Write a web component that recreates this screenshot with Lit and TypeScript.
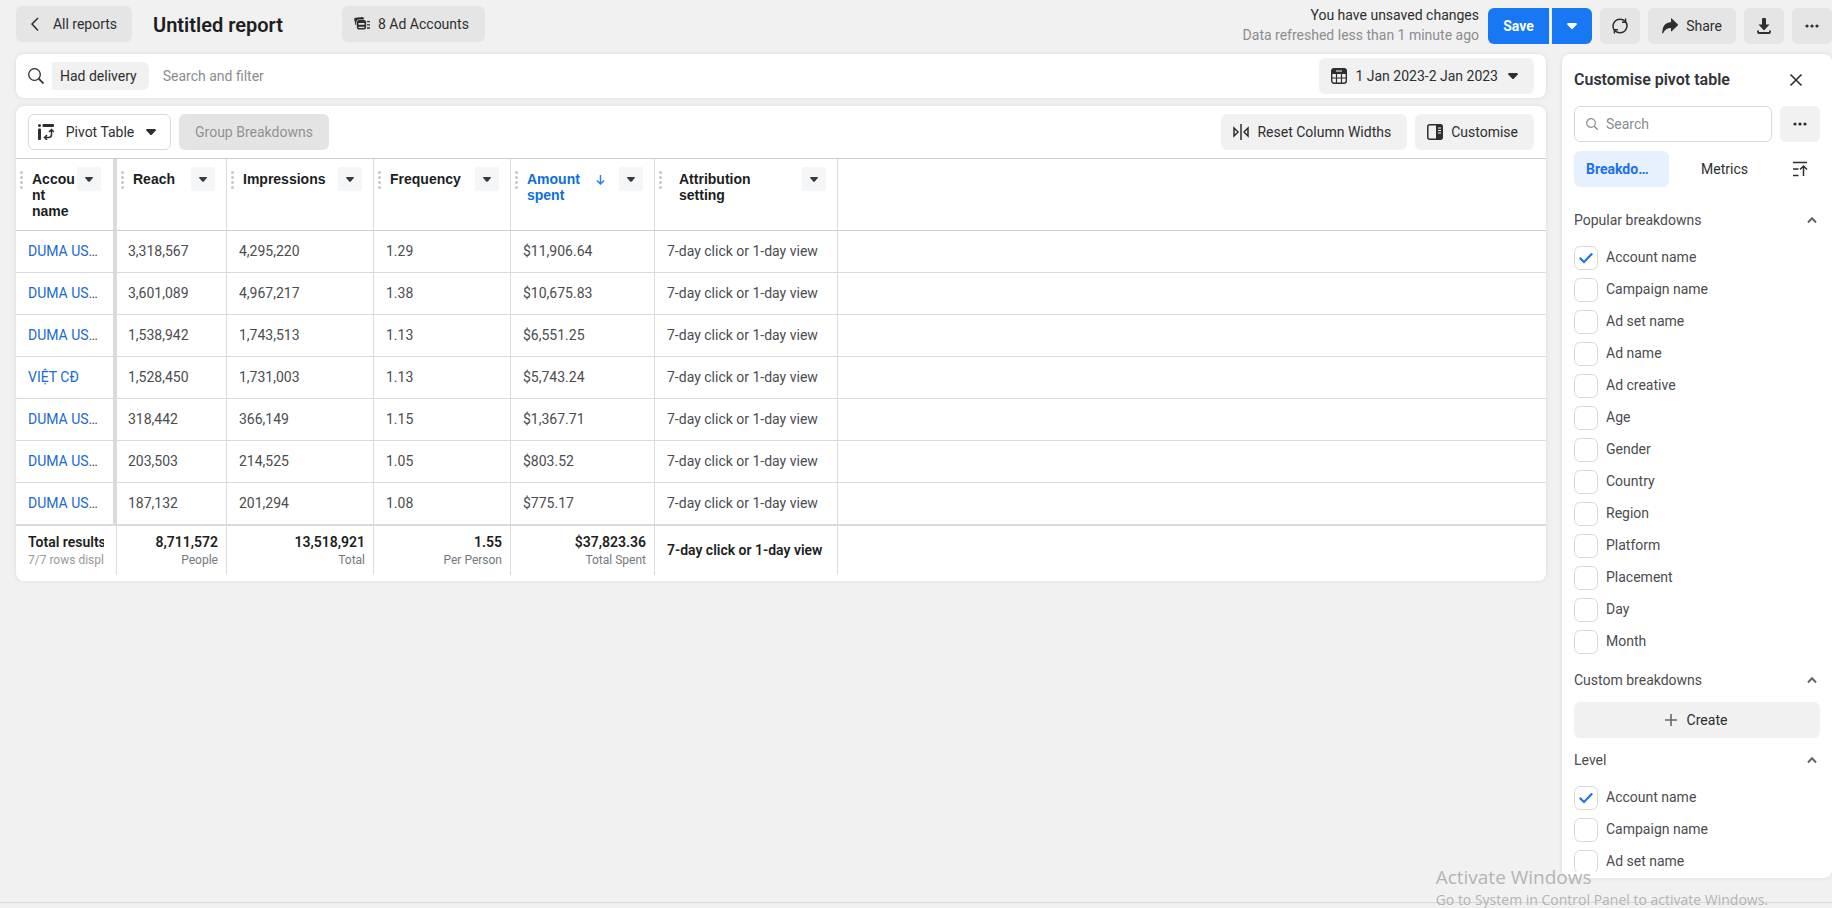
import { LitElement, html, css, svg } from "lit";
import { customElement, property } from "lit/decorators.js";

const icon = (body: unknown, w = 16, h = 16) => html`<svg width=${w} height=${h} viewBox="0 0 ${w} ${h}" fill="none" stroke="currentColor" aria-hidden="true">${body}</svg>`;

const caret = icon(svg`<path d="M0 1.2Q0 0 1.2 0H8.8Q10 0 9.8 1.4L6 5.4Q5 6.4 4 5.4L.3 1.6Z" fill="currentColor" stroke="none"/>`, 10, 6);
const caretSmall = icon(svg`<path d="M0 .8Q0 0 .8 0H7.2Q8 0 8 .8L4.8 4.4Q4 5.2 3.2 4.4Z" fill="currentColor" stroke="none"/>`, 8, 5);
const back = icon(svg`<path d="M11 2L5 8l6 6.500" stroke-width="1.500"/>`);
const accounts = icon(svg`<path d="M.2 3.200Q0 1.900 1.300 1.700L8.500 1Q9.600 1 9.800 2V3.500H4.500Q2.300 3.500 2.300 6V9.500L1.500 9Z" fill="currentColor" stroke="none"/><rect x="3.700" y="4.700" width="7.600" height="8.100" rx="1.200" stroke-width="1.600"/><path d="M4 6h7M4 9.700h7" stroke-width="2"/><path d="M13 5.700H16M13 8.800H16M13 12H16" stroke-width="1.300"/>`);
const magnifier = icon(svg`<circle cx="6.500" cy="6.500" r="5.800" stroke-width="1.300"/><path d="M10.700 10.700 15.500 15.500" stroke-width="1.700"/>`);
const magnifierSmall = icon(svg`<circle cx="5" cy="5" r="4.300" stroke-width="1.200"/><path d="M8.200 8.200 12 12" stroke-width="1.300"/>`, 12, 12);
const pivot = icon(svg`<g fill="currentColor" stroke="none"><circle cx="1.500" cy="1.500" r="1.500"/><rect x="4.500" width="11.500" height="3" rx="1"/><rect y="4.500" width="3" height="11.500" rx="1"/></g><path d="M13.500 6v4.500q0 3-3 3H6.500M11 8l2.500-2.500L16 8M9 11l-2.500 2.500L9 16" stroke-width="1.500"/>`);
const calendar = icon(svg`<rect x=".7" y=".7" width="14.600" height="14.600" rx="2.500" stroke-width="1.400"/><path d="M1 1.800Q1 1 2 1H14q1 0 1 1V5.500H1Z" fill="currentColor"/><path d="M5.500 5v10M10.500 5v10M1 10h14" stroke-width="1.200"/><path d="M5 3h6" stroke="#fff" stroke-width="1"/>`);
const reset = icon(svg`<path d="M8 0v16" stroke-width="1.500"/><path d="M1 4v8l4-4Z M15 4v8l-4-4Z" stroke-width="1.500"/>`);
const sidebar = icon(svg`<rect x=".8" y=".8" width="14.400" height="14.400" rx="2" stroke-width="1.500"/><path d="M9.500 1H14q1 0 1 1v12q0 1-1 1H9.500Z" fill="currentColor"/><path d="M11 4h3M11 6.500h3M11 9h3" stroke="#fff"/>`);
const refresh = icon(svg`<path d="M2.200 12A7 7 0 0 1 8 1.200Q11 1.200 13.200 3.400M13.800 4A7 7 0 0 1 8 14.800Q5 14.800 2.800 12.600" stroke-width="1.500"/><path d="M10 4.200H13.600V.5M6 11.800H2.400V15.500" stroke-width="1.400"/>`);
const share = icon(svg`<path d="M9 .8Q9 0 9.700.5L15.700 6.300Q16.200 7 15.700 7.600L9.700 13.300Q9 13.800 9 13V10Q3.500 10 1 15.300.2 16 .1 15 .3 4.500 9 4Z" fill="currentColor" stroke="none"/>`);
const download = icon(svg`<path d="M6 1q0-1 1-1H9q1 0 1 1V6.500h3.500L8 12.500 2.500 6.500H6Z" fill="currentColor" stroke="none"/><path d="M2 12.500v1.500q0 1 1 1H13q1 0 1-1V12.500" stroke-width="1.800"/>`);
const dots = icon(svg`<g fill="currentColor" stroke="none"><circle cx="3" cy="8" r="1.600"/><circle cx="8" cy="8" r="1.600"/><circle cx="13" cy="8" r="1.600"/></g>`);
const close = icon(svg`<path d="M2.500 2.500l11 11M13.500 2.500l-11 11" stroke-width="1.600"/>`);
const sortIcon = icon(svg`<path d="M1 1.500h14M1 8h5.500M1 14.500h5.500M11.500 15V5M8 8.500 11.500 5 15 8.500" stroke-width="1.500"/>`);
const chevron = icon(svg`<path d="M1 6.500 5 2.200 9 6.500" stroke-width="2" stroke="#606770"/>`, 10, 8);
const plus = icon(svg`<path d="M6 0v12M0 6h12" stroke-width="1.600" stroke="#606770"/>`, 12, 12);
const grip = icon(svg`<g fill="#c4c6ca" stroke="none"><circle cx="1.500" cy="1.500" r="1.500"/><circle cx="1.500" cy="6.500" r="1.500"/><circle cx="1.500" cy="11.500" r="1.500"/><circle cx="1.500" cy="16.500" r="1.500"/></g>`, 3, 18);
const arrowDown = icon(svg`<path d="M4.500 0v9M1 5.500 4.500 9 8 5.500" stroke-width="1.500"/>`, 9, 10);

const base = css`
  * { box-sizing: border-box; }
  svg { display: block; flex: none; }
  button, input { font: inherit; color: inherit; margin: 0; }
  button { display: flex; align-items: center; justify-content: center; gap: 8px; height: 36px; padding: 0 12px; border: 0; border-radius: 6px; background: #f1f1f1; white-space: nowrap; cursor: pointer; }
`;

@customElement("report-header")
class ReportHeader extends LitElement {
  static styles = [base, css`
    :host { display: flex; align-items: flex-start; height: 54px; padding: 6px 0 0 16px; overflow: hidden; }
    button { background: #e5e5e5; }
    .back { width: 116px; gap: 10px; padding: 0 16px 0 12px; }
    h1 { margin: 0 0 0 21px; width: 189px; font-size: 20px; line-height: 38px; font-weight: 600; color: #1c1e21; }
    .accounts { padding: 0 16px 0 12px; }
    .spacer { flex: 1; }
    .status { text-align: right; line-height: 20px; margin: -1px 9px 0 0; white-space: nowrap; }
    .status p { margin: 0; }
    .muted { color: #8a8d91; }
    .actions { display: flex; gap: 8px; padding-top: 2px; }
    .save { display: flex; gap: 3px; }
    .save button { background: #1877f2; color: #fff; font-weight: 700; }
    .main { border-radius: 6px 0 0 6px; width: 61px; }
    .more { border-radius: 0 6px 6px 0; width: 40px; }
    .square { width: 40px; padding: 0; }
    .share { width: 88px; }
  `];
  render() {
    return html`
      <button class="back">${back}All reports</button>
      <h1>Untitled report</h1>
      <button class="accounts">${accounts}8 Ad Accounts</button>
      <div class="spacer"></div>
      <div class="status"><p>You have unsaved changes</p><p class="muted">Data refreshed less than 1 minute ago</p></div>
      <div class="actions">
        <div class="save"><button class="main">Save</button><button class="more" aria-label="Save options">${caret}</button></div>
        <button class="square" aria-label="Refresh">${refresh}</button>
        <button class="share">${share}Share</button>
        <button class="square" aria-label="Download">${download}</button>
        <button class="square" aria-label="More">${dots}</button>
      </div>`;
  }
}

@customElement("filter-bar")
class FilterBar extends LitElement {
  static styles = [base, css`
    :host { display: flex; align-items: center; height: 44px; padding: 0 12px; background: #fff; border-radius: 8px; box-shadow: 0 0 4px rgba(0, 0, 0, 0.1); }
    .chip { height: 28px; margin-left: 8px; padding: 0 12px 1px 8px; border-radius: 0 6px 6px 0; }
    input { flex: 1; min-width: 0; height: 36px; padding: 0 14px 1px; border: 0; outline: 0; background: none; }
    input::placeholder { color: #8a8d91; opacity: 1; }
    .date { padding: 0 16px 0 12px; }
    .date svg:last-child { margin-left: 2px; }
  `];
  render() {
    return html`${magnifier}<button class="chip">Had delivery</button>
      <input type="text" aria-label="Search and filter" placeholder="Search and filter" />
      <button class="date">${calendar}1 Jan 2023-2 Jan 2023${caret}</button>`;
  }
}

const columns = [
  { key: "account", label: "Account name" },
  { key: "reach", label: "Reach" },
  { key: "impressions", label: "Impressions" },
  { key: "frequency", label: "Frequency" },
  { key: "spent", label: "Amount spent", sorted: true },
  { key: "attribution", label: "Attribution setting" },
];

const windowText = "7-day click or 1-day view";
const rows = [
  ["DUMA USA 01", "3,318,567", "4,295,220", "1.29", "$11,906.64", windowText],
  ["DUMA USA 02", "3,601,089", "4,967,217", "1.38", "$10,675.83", windowText],
  ["DUMA USA 03", "1,538,942", "1,743,513", "1.13", "$6,551.25", windowText],
  ["VIỆT CĐ", "1,528,450", "1,731,003", "1.13", "$5,743.24", windowText],
  ["DUMA USA 04", "318,442", "366,149", "1.15", "$1,367.71", windowText],
  ["DUMA USA 05", "203,503", "214,525", "1.05", "$803.52", windowText],
  ["DUMA USA 06", "187,132", "201,294", "1.08", "$775.17", windowText],
];
const totals = [["8,711,572", "People"], ["13,518,921", "Total"], ["1.55", "Per Person"], ["$37,823.36", "Total Spent"]];

@customElement("pivot-report")
class PivotReport extends LitElement {
  static styles = [base, css`
    :host { display: block; padding-bottom: 6px; background: #fff; border-radius: 8px; box-shadow: 0 0 4px rgba(0, 0, 0, 0.1); }
    .toolbar { display: flex; align-items: center; gap: 8px; padding: 8px 12px; border-bottom: 1px solid #ccced2; }
    .pivot { width: 143px; gap: 12px; padding: 0 14px 0 9px; background: #fff; border: 1px solid #d8d9dc; }
    .group { padding: 0 16px; background: #e4e4e4; color: #909295; }
    .spacer { flex: 1; }
    .tool { padding: 0 16px 0 12px; }
    table { width: 100%; table-layout: fixed; border-collapse: separate; border-spacing: 0; }
    .account { width: 101px; }
    .reach { width: 110px; }
    .impressions { width: 147px; }
    .frequency { width: 137px; }
    .spent { width: 144px; }
    .attribution { width: 183px; }
    th, td { padding: 0; text-align: left; font-weight: 400; border-right: 1px solid #dadbdd; border-bottom: 1px solid #dadbdd; }
    th:last-child, td:last-child { border-right: 0; }
    thead th, thead td { height: 72px; vertical-align: top; color: #1c1e21; border-bottom-color: #ccced2; }
    thead th:first-child, tbody th { border-right: 4px solid #dadbdd; }
    .head { display: flex; align-items: flex-start; padding: 8px 11px 0 4px; }
    th:first-child .head { padding-right: 12px; }
    .head > svg { margin-top: 4px; }
    .label { flex: 1; min-width: 0; margin: 4px 0 0 9px; font-family: "Liberation Sans", Arial, sans-serif; font-weight: 700; line-height: 16px; overflow-wrap: anywhere; }
    .wide .label { margin: 4px 40px 0 17px; }
    .sorted .label { color: #0a6fe0; }
    .sorted .arrow { color: #2f80f0; margin: 8px 14px 0 0; }
    .menu { width: 24px; height: 24px; padding: 0; border-radius: 2px; background: #f5f6f7; color: #3a3b3d; }
    tbody td, tbody th { height: 42px; padding: 0 12px 2px; overflow: hidden; text-overflow: ellipsis; white-space: nowrap; color: #4b4c4f; }
    tbody td:nth-child(2) { padding-left: 11px; }
    tbody a { color: #1a69d4; text-decoration: none; }
    tbody tr:last-child > * { height: 43px; border-bottom: 2px solid #dadbdd; }
    tfoot th, tfoot td { height: 49px; padding: 0 8px 2px 12px; border-bottom: 0; text-align: right; color: #1c1e21; font-weight: 600; line-height: 20px; white-space: nowrap; overflow: hidden; }
    tfoot th { text-align: left; padding-right: 12px; }
    tfoot p { margin: 0; overflow: hidden; }
    .unit { font-size: 12px; line-height: 16px; font-weight: 400; color: #737980; }
    tfoot th .unit { color: #999; }
    tfoot .plain { text-align: left; }
  `];
  render() {
    return html`
      <div class="toolbar">
        <button class="pivot">${pivot}Pivot Table${caret}</button>
        <button class="group" disabled>Group Breakdowns</button>
        <div class="spacer"></div>
        <button class="tool">${reset}Reset Column Widths</button>
        <button class="tool">${sidebar}Customise</button>
      </div>
      <table>
        <colgroup>${columns.map((c) => html`<col class=${c.key} />`)}<col /></colgroup>
        <thead><tr>
          ${columns.map((c) => html`<th scope="col"><div class="head ${c.sorted ? "sorted" : ""} ${c.key === "attribution" ? "wide" : ""}">
            ${grip}<span class="label">${c.label}</span>
            ${c.sorted ? html`<span class="arrow">${arrowDown}</span>` : ""}
            <button class="menu" aria-label="${c.label} options">${caretSmall}</button></div></th>`)}
          <td></td>
        </tr></thead>
        <tbody>
          ${rows.map(([name, ...cells]) => html`<tr><th scope="row"><a href="#">${name}</a></th>${cells.map((v) => html`<td>${v}</td>`)}<td></td></tr>`)}
        </tbody>
        <tfoot><tr>
          <th scope="row"><p>Total results</p><p class="unit">7/7 rows displayed</p></th>
          ${totals.map(([v, u]) => html`<td><p>${v}</p><p class="unit">${u}</p></td>`)}
          <td class="plain">${windowText}</td><td></td>
        </tr></tfoot>
      </table>`;
  }
}

@customElement("check-list")
class CheckList extends LitElement {
  @property({ attribute: false }) items: string[] = [];
  static styles = [base, css`
    :host { display: flex; flex-direction: column; gap: 8px; }
    label { display: flex; align-items: center; gap: 8px; line-height: 24px; color: #4b4c4f; }
    input { appearance: none; width: 24px; height: 24px; border: 1px solid #d8d9dc; border-radius: 6px; background: #fff; display: grid; place-items: center; }
    input:checked::before { content: ""; width: 14px; height: 11px; background: #1877f2; clip-path: polygon(10% 42%, 36% 72%, 88% 2%, 100% 16%, 36% 100%, 0% 57%); }
    span { margin-top: -2px; }
  `];
  render() {
    return html`${this.items.map((t, i) => html`<label><input type="checkbox" .checked=${i === 0} /><span>${t}</span></label>`)}`;
  }
}

@customElement("customise-panel")
class CustomisePanel extends LitElement {
  static styles = [base, css`
    :host { display: flex; flex-direction: column; padding: 0 12px 6px; background: #fff; border-radius: 8px; box-shadow: 0 0 4px rgba(0, 0, 0, 0.1); overflow: hidden; }
    .title { display: flex; align-items: center; justify-content: space-between; height: 52px; }
    h2 { margin: 0; font-size: 16px; line-height: 20px; font-weight: 600; color: #333436; }
    .title button { width: 24px; padding: 0; margin-right: 12px; background: none; }
    .search { display: flex; gap: 8px; }
    .box { display: flex; align-items: center; flex: 1; min-width: 0; gap: 8px; height: 36px; padding: 0 11px; border: 1px solid #d8d9dc; border-radius: 6px; color: #8a8d91; }
    .box input { flex: 1; min-width: 0; padding: 0; border: 0; outline: 0; background: none; }
    .box input::placeholder { color: #8a8d91; opacity: 1; }
    .square { width: 40px; padding: 0; }
    .tabs { display: flex; align-items: center; margin-top: 9px; }
    .tabs button { background: none; }
    .tabs .active { width: 95px; justify-content: flex-start; background: #e7f1fd; color: #1b6fee; font-weight: 700; }
    .active span { overflow: hidden; text-overflow: ellipsis; }
    .tabs .metrics { flex: 1; }
    .list { flex: 1; min-height: 0; overflow: hidden; }
    .section { display: flex; align-items: center; justify-content: space-between; width: 100%; height: 44px; padding: 0 3px 0 0; background: none; color: #4b4c4f; }
    h3 { margin: 0; font-size: 14px; font-weight: 400; }
    .popular { margin: 11px 0 4px; }
    .custom { margin-top: 4px; }
    .create { width: 100%; gap: 10px; padding: 0 14px 0 12px; }
    .level { margin-bottom: 4px; }
  `];
  section(name: string, label: string) {
    return html`<h3 class=${name}><button class="section" aria-expanded="true"><span>${label}</span>${chevron}</button></h3>`;
  }
  render() {
    return html`
      <div class="title"><h2>Customise pivot table</h2><button aria-label="Close">${close}</button></div>
      <div class="search"><div class="box">${magnifierSmall}<input type="search" aria-label="Search" placeholder="Search" /></div>
        <button class="square" aria-label="More">${dots}</button></div>
      <div class="tabs"><button class="active"><span>Breakdowns</span></button><button class="metrics">Metrics</button><button class="square" aria-label="Sort">${sortIcon}</button></div>
      <div class="list">
        ${this.section("popular", "Popular breakdowns")}
        <check-list .items=${["Account name", "Campaign name", "Ad set name", "Ad name", "Ad creative", "Age", "Gender", "Country", "Region", "Platform", "Placement", "Day", "Month"]}></check-list>
        ${this.section("custom", "Custom breakdowns")}
        <button class="create">${plus}Create</button>
        ${this.section("level", "Level")}
        <check-list .items=${["Account name", "Campaign name", "Ad set name"]}></check-list>
      </div>`;
  }
}

@customElement("app-root")
class AppRoot extends LitElement {
  static styles = [base, css`
    :host { display: flex; flex-direction: column; position: relative; height: 100vh; overflow: hidden; background: #f1f1f1; color: #2d2e30; font: 400 14px/20px Roboto, "Liberation Sans", sans-serif; }
    .body { flex: 1; min-height: 0; display: flex; gap: 16px; padding-left: 16px; }
    main { flex: 1; min-width: 0; display: flex; flex-direction: column; gap: 8px; }
    customise-panel { width: 270px; }
    footer { height: 30px; padding-bottom: 5px; display: flex; flex-direction: column; justify-content: flex-end; }
    footer::after { content: ""; height: 1px; background: #d8d8d8; }
    .notice { position: absolute; right: 64px; bottom: -2px; color: #b4b4b4; font-family: "Open Sans", "Noto Sans", sans-serif; pointer-events: none; white-space: nowrap; }
    .notice p { margin: 0; font-size: 14px; line-height: 20px; }
    .notice .lead { font-size: 19px; line-height: 25px; }
  `];
  render() {
    return html`
      <report-header></report-header>
      <div class="body">
        <main><filter-bar></filter-bar><pivot-report></pivot-report></main>
        <customise-panel></customise-panel>
      </div>
      <footer></footer>
      <div class="notice"><p class="lead">Activate Windows</p><p>Go to System in Control Panel to activate Windows.</p></div>`;
  }
}
